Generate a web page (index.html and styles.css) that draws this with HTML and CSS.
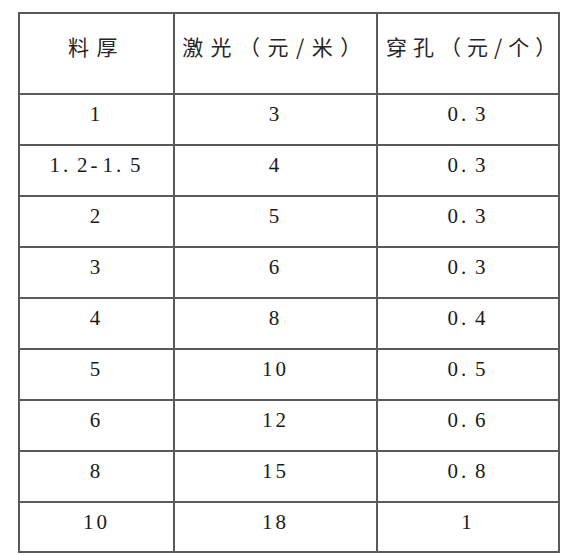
FILE: index.html
```html
<!DOCTYPE html>
<html>
<head>
<meta charset="utf-8">
<link rel="stylesheet" href="styles.css">
</head>
<body>
<table class="price">
  <colgroup>
    <col class="c1"><col class="c2"><col class="c3">
  </colgroup>
  <thead>
    <tr><th class="h1">料厚</th><th class="h2">激光（元/米）</th><th class="h3">穿孔（元/个）</th></tr>
  </thead>
  <tbody>
    <tr><td>1</td><td>3</td><td>0<span class="dot">.</span>3</td></tr>
    <tr><td>1<span class="dot">.</span>2<span class="hy">-</span>1<span class="dot">.</span>5</td><td>4</td><td>0<span class="dot">.</span>3</td></tr>
    <tr><td>2</td><td>5</td><td>0<span class="dot">.</span>3</td></tr>
    <tr><td>3</td><td>6</td><td>0<span class="dot">.</span>3</td></tr>
    <tr><td>4</td><td>8</td><td>0<span class="dot">.</span>4</td></tr>
    <tr><td>5</td><td>10</td><td>0<span class="dot">.</span>5</td></tr>
    <tr><td>6</td><td>12</td><td>0<span class="dot">.</span>6</td></tr>
    <tr><td>8</td><td>15</td><td>0<span class="dot">.</span>8</td></tr>
    <tr class="last"><td>10</td><td>18</td><td>1</td></tr>
  </tbody>
</table>
</body>
</html>
```
FILE: styles.css
```css
html, body {
  margin: 0;
  padding: 0;
  background: #ffffff;
}
body {
  padding: 12px 0 0 18px;
}
.price {
  border-collapse: collapse;
  table-layout: fixed;
  width: 540px;
  color: #1a1a1a;
}
.c1 { width: 155px; }
.c2 { width: 203px; }
.c3 { width: 182px; }
.price th,
.price td {
  border: 2px solid #5a5a5a;
  text-align: center;
  vertical-align: top;
  padding: 0;
  box-sizing: border-box;
}
.price th {
  height: 81px;
  padding-top: 20px;
  font-family: "Noto Sans CJK SC", "Noto Sans", sans-serif;
  font-weight: 400;
  font-size: 21px;
  line-height: 24px;
  color: #262626;
}
.price th.h1 {
  letter-spacing: 7.5px;
}
.price th.h2 {
  letter-spacing: 7.5px;
}
.price th.h3 {
  letter-spacing: 6px;
  padding-left: 8px;
}
.price td {
  height: 51px;
  padding-top: 7px;
  font-family: "Liberation Serif", "DejaVu Serif", serif;
  font-size: 21px;
  line-height: 24px;
  letter-spacing: 3px;
}
.price tr.last td {
  height: 50px;
}
.dot {
  display: inline-block;
  width: 14px;
  text-align: left;
  letter-spacing: 0;
}
.hy {
  display: inline-block;
  width: 12px;
  text-align: left;
  letter-spacing: 0;
}
```
